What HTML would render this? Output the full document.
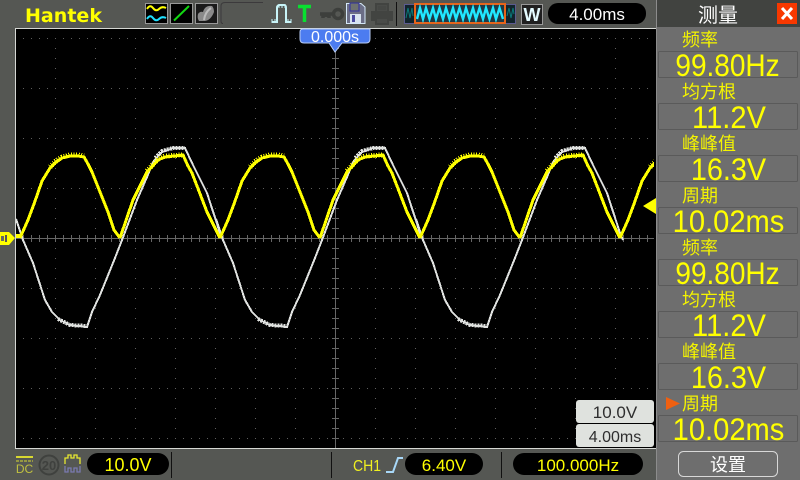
<!DOCTYPE html>
<html><head><meta charset="utf-8">
<style>
html,body{margin:0;padding:0;background:#555753;width:800px;height:480px;overflow:hidden}
svg{display:block}
text{font-family:"Liberation Sans","WenQuanYi Zen Hei","Noto Sans CJK SC",sans-serif}
.cn{font-size:18px;fill:#f4f400}
.v{font-size:28px;fill:#ffff00;text-anchor:middle}
.p{font-size:18px;fill:#ffff00;text-anchor:middle}
</style></head><body>
<svg width="800" height="480" viewBox="0 0 800 480" xmlns="http://www.w3.org/2000/svg">
<defs>
<pattern id="r" x="23" y="38" width="8" height="50" patternUnits="userSpaceOnUse"><rect width="1" height="1" fill="#5e5e5e"/></pattern>
<pattern id="c" x="55" y="28" width="40" height="10" patternUnits="userSpaceOnUse"><rect width="1" height="1" fill="#5e5e5e"/></pattern>
<pattern id="hx" x="15" y="235" width="8" height="7" patternUnits="userSpaceOnUse"><rect width="1" height="7" fill="#666"/></pattern>
<pattern id="vy" x="332" y="28" width="7" height="10" patternUnits="userSpaceOnUse"><rect width="7" height="1" fill="#666"/></pattern>
<clipPath id="plot"><rect x="16" y="29" width="638" height="419"/></clipPath>
<g id="ya"><path d="M0 0L8-18 14-34 22-57 30-70 36-76 42-80 50-82 58-82 64-81 68-74 72-66 80-46 88-26 94-8 100 0" fill="none" stroke="#ff0" stroke-width="3"/><path d="M30-71L36-77 42-81 50-83 58-83 64-82" fill="none" stroke="#ff0" stroke-width="5" stroke-dasharray="1 1.5"/></g>
<g id="yb"><path d="M0 0L13-38 27-66 38-78 45-81 63-83 68-72 72-65 87-26 100 0" fill="none" stroke="#ff0" stroke-width="3"/><path d="M27-67L38-79 45-82 63-83" fill="none" stroke="#ff0" stroke-width="5" stroke-dasharray="1 1.5"/></g>
<g id="g"><path d="M16 219L23 240 33 263 45 300 52 312 60 320 70 325 87 327 92 312 100 295 115 258 122 240 137 200 147 177 153 162 162 152 173 148 185 148 193 165 207 193 220 233 223 240" fill="none" stroke="#e0e2e0" stroke-width="2"/><path d="M58 319L70 325 87 326M155 158L162 151 173 148 185 148" fill="none" stroke="#e0e2e0" stroke-width="4" stroke-dasharray="2 1"/></g>
</defs>

<rect width="800" height="480" fill="#555753"/>

<!-- plot -->
<rect x="15" y="28" width="641" height="420" fill="#000"/>
<rect x="15" y="28" width="641" height="1" fill="#d5d7d3"/>
<rect x="15" y="28" width="1" height="420" fill="#d5d7d3"/>
<rect x="15" y="448" width="641" height="1" fill="#d5d7d3"/>
<rect x="16" y="29" width="638" height="419" fill="url(#r)"/>
<rect x="16" y="29" width="638" height="419" fill="url(#c)"/>
<rect x="16" y="238" width="638" height="1" fill="#666"/>
<rect x="335" y="29" width="1" height="419" fill="#666"/>
<rect x="16" y="235" width="638" height="7" fill="url(#hx)"/>
<rect x="332" y="29" width="7" height="419" fill="url(#vy)"/>

<!-- traces -->
<g clip-path="url(#plot)" shape-rendering="crispEdges">
<use href="#g"/><use href="#g" x="200"/><use href="#g" x="400"/>
<use href="#ya" x="20" y="238"/><use href="#yb" x="120" y="238"/><use href="#ya" x="220" y="238"/><use href="#yb" x="320" y="238"/><use href="#ya" x="420" y="238"/><use href="#yb" x="520" y="238"/><use href="#ya" x="620" y="238"/>
<path d="M16 236H20" stroke="#ff0" stroke-width="4"/>
</g>

<!-- markers -->
<path d="M0 232H9L15 238 9 245H0Z" fill="#ff0"/>
<rect x="1" y="236" width="3" height="5" fill="#666"/><rect x="5" y="235" width="2" height="7" fill="#555"/>
<path d="M643 206L656 198V214Z" fill="#ff0"/>

<!-- top trigger marker -->
<path d="M303 29H370V39Q370 43 366 43H342L335 52 329 43H304Q300 43 300 39V32Q300 29 303 29Z" fill="#4c7cf0" stroke="#b8cdf5" stroke-width="1"/>
<text x="335" y="42" font-size="16" fill="#fff" text-anchor="middle">0.000s</text>

<!-- logo -->
<text x="25" y="22" font-size="19" font-weight="bold" fill="#ff0" style="font-family:'DejaVu Sans',sans-serif" textLength="77" lengthAdjust="spacingAndGlyphs">Hantek</text>

<!-- mode icons -->
<rect x="145.500" y="3.500" width="22" height="20" fill="#000" stroke="#999"/>
<path d="M147 9Q150 4 153 8T159 9 166 8" fill="none" stroke="#ff0" stroke-width="2"/>
<path d="M147 19Q150 14 153 18T159 19 166 18" fill="none" stroke="#1fe0ff" stroke-width="2"/>
<rect x="170.500" y="3.500" width="22" height="20" fill="#000" stroke="#999"/>
<path d="M174 20.500L189 6" stroke="#12d812" stroke-width="2"/>
<rect x="195.500" y="3.500" width="22" height="20" fill="#1a1a1a" stroke="#999"/>
<path d="M198 14Q200 11 203 12 205 5 212 6 214 8 214 12 211 20 205 21L199 21Q197 18 198 14Z" fill="#8a8a8a"/>
<path d="M204 20Q205 12 211 8" stroke="#bbb" stroke-width="2" fill="none"/>
<path d="M263 2.500H225Q221 2.500 221 6V21Q221 23.500 223 23.500" fill="none" stroke="#3c3a3c" stroke-width="1"/>

<!-- pulse -->
<path d="M272 22H277V8Q277 5 280 5H284Q286 5 286 8V22H291" fill="none" stroke="#c8f4f8" stroke-width="2"/>
<path d="M272 19V23M275 19V23M279 4V8M282 4V8M285 4V8M288 19V23M291 19V23" stroke="#c8f4f8" stroke-width="1"/>
<!-- T -->
<path d="M298 6.500H311M304.500 6V22" stroke="#08e030" stroke-width="3.500" fill="none"/>
<!-- key -->
<path d="M320 14H334M323 14V18M326 14V17M329 14V18" stroke="#3d3f3c" stroke-width="3.500" fill="none"/>
<circle cx="338" cy="14" r="4.500" fill="none" stroke="#3d3f3c" stroke-width="3.500"/>
<!-- floppy -->
<path d="M346.500 3.500H361L365 7V23.500H346.500Z" fill="#6b6e86" stroke="#d4e8f8" stroke-width="1"/>
<rect x="350" y="3" width="9" height="8" fill="#6e7270" stroke="#3030a0" stroke-width="1"/>
<rect x="350" y="14" width="11" height="9" fill="#d8e4f0"/>
<rect x="352" y="15" width="3" height="7" fill="#4a4aa0"/>
<!-- printer -->
<path d="M376 4H388V12H376Z" fill="#4a4c49" stroke="#424441" stroke-width="2"/>
<path d="M372 12H392V20H372Z" fill="#424441" stroke="#424441" stroke-width="2"/>
<path d="M376 18H388V24H376Z" fill="#4a4c49" stroke="#424441" stroke-width="2"/>
<path d="M378 7H386M378 9H386" stroke="#424441"/>
<rect x="396" y="2" width="1" height="24" fill="#111"/>

<!-- memory window -->
<rect x="404.500" y="4.500" width="111" height="19" fill="#12242c" stroke="#5c5a90"/>
<path d="M406 18L408 8 410 18 412 8 413 16M507 16L509 8 511 18 513 8 514 14" fill="none" stroke="#0a7a7a" stroke-width="1"/>
<rect x="415" y="4" width="90" height="19" fill="#1e3a46" stroke="#e8641a" stroke-width="2"/>
<path d="M417 19L420 8 423 19 426 8 429.500 19 433 8 436 19 439.500 8 443 19 446 8 449.500 19 453 8 456 19 459.500 8 463 19 466 8 469.500 19 473 8 476 19 479.500 8 483 19 486 8 489.500 19 493 8 496 19 499.500 8 503 19" fill="none" stroke="#20e8ff" stroke-width="2.400"/>

<!-- W -->
<rect x="521.500" y="4.500" width="21" height="20" fill="#202020" stroke="#999"/>
<text x="532" y="21" font-size="18" font-weight="bold" fill="#e4fbff" text-anchor="middle">W</text>

<!-- time pill -->
<rect x="548" y="3" width="98" height="21" rx="10" fill="#000"/>
<text x="597" y="20" font-size="17" fill="#fff" text-anchor="middle">4.00ms</text>

<!-- right panel -->
<rect x="656" y="0" width="144" height="480" fill="#6e6e6e"/>
<rect x="656" y="0" width="1" height="480" fill="#8c8c8c"/>
<rect x="657" y="0" width="143" height="27" fill="#414340"/>
<text x="718" y="22" font-size="20" fill="#fff" text-anchor="middle">测量</text>
<rect x="777" y="3" width="20" height="21" fill="#f83800"/>
<path d="M782 8L792 19M792 8L782 19" stroke="#fff" stroke-width="3"/>

<g fill="#6e6e6e" stroke="#5a5a5a">
<rect x="658.500" y="51.500" width="139" height="26" rx="1"/>
<rect x="658.500" y="103.500" width="139" height="26" rx="1"/>
<rect x="658.500" y="155.500" width="139" height="26" rx="1"/>
<rect x="658.500" y="207.500" width="139" height="26" rx="1"/>
<rect x="658.500" y="259.500" width="139" height="26" rx="1"/>
<rect x="658.500" y="311.500" width="139" height="26" rx="1"/>
<rect x="658.500" y="363.500" width="139" height="26" rx="1"/>
<rect x="658.500" y="415.500" width="139" height="26" rx="1"/>
</g>

<text class="cn" x="682" y="46">频率</text>
<text class="cn" x="682" y="98">均方根</text>
<text class="cn" x="682" y="150">峰峰值</text>
<text class="cn" x="682" y="202">周期</text>
<text class="cn" x="682" y="254">频率</text>
<text class="cn" x="682" y="306">均方根</text>
<text class="cn" x="682" y="358">峰峰值</text>
<text class="cn" x="682" y="410">周期</text>

<text class="v" transform="translate(727.500 76) scale(1 1.12)">99.80Hz</text>
<text class="v" transform="translate(729 128) scale(1.04 1.12)">11.2V</text>
<text class="v" transform="translate(728.500 180) scale(1.03 1.12)">16.3V</text>
<text class="v" transform="translate(728.500 232) scale(1.04 1.12)">10.02ms</text>
<text class="v" transform="translate(727.500 284) scale(1 1.12)">99.80Hz</text>
<text class="v" transform="translate(729 336) scale(1.04 1.12)">11.2V</text>
<text class="v" transform="translate(728.500 388) scale(1.03 1.12)">16.3V</text>
<text class="v" transform="translate(728.500 440) scale(1.04 1.12)">10.02ms</text>

<path d="M666 397L680 403.500 666 410Z" fill="#f06010"/>

<rect x="678.500" y="451.500" width="99" height="25" rx="5" fill="#6e6e6e" stroke="#d8d8d8"/>
<text x="728" y="471" font-size="18" fill="#fff" text-anchor="middle">设置</text>

<!-- scale boxes -->
<rect x="576" y="400" width="78" height="23" rx="3" fill="#dfe2de"/>
<rect x="576" y="424" width="78" height="23" rx="3" fill="#dfe2de"/>
<text x="615" y="418" font-size="17" fill="#2e2e2e" text-anchor="middle">10.0V</text>
<text x="615" y="442" font-size="16" fill="#2e2e2e" text-anchor="middle">4.00ms</text>

<!-- bottom bar -->
<rect x="16" y="456" width="17" height="2" fill="#d8d830"/>
<path d="M16 461H33" stroke="#d8d830" stroke-dasharray="3 1" stroke-width="1"/>
<text x="24.500" y="473" font-size="12" fill="#c0c040" text-anchor="middle">DC</text>
<circle cx="49" cy="465" r="9.500" fill="none" stroke="#3f413e" stroke-width="2"/>
<text x="49" y="470" font-size="13" fill="#3f413e" text-anchor="middle" font-weight="bold">20</text>
<path d="M65 464V458H68V455H71V458H74V455H77V458H80V464" fill="none" stroke="#e8e830" stroke-width="1.300"/>
<path d="M65 466V472H68V468H71V472H74V468H77V472H80V466" fill="none" stroke="#7a7ab0" stroke-width="1.300"/>

<rect x="87" y="453" width="82" height="22" rx="11" fill="#000"/>
<text class="p" x="128" y="471">10.0V</text>
<rect x="171" y="452" width="1" height="26" fill="#111"/>
<rect x="331" y="452" width="1" height="26" fill="#111"/>
<rect x="501" y="452" width="1" height="26" fill="#111"/>

<text fill="#f0f020" transform="translate(353 471) scale(1 1.15)" style="font-size:14px">CH1</text>
<path d="M386 472H393L398 458H403" fill="none" stroke="#a8d8f8" stroke-width="2"/>
<rect x="405" y="453" width="78" height="22" rx="11" fill="#000"/>
<text class="p" x="444" y="471" style="font-size:17px">6.40V</text>
<rect x="513" y="453" width="130" height="22" rx="11" fill="#000"/>
<text class="p" x="578" y="471" style="font-size:17px">100.000Hz</text>
</svg>
</body></html>
